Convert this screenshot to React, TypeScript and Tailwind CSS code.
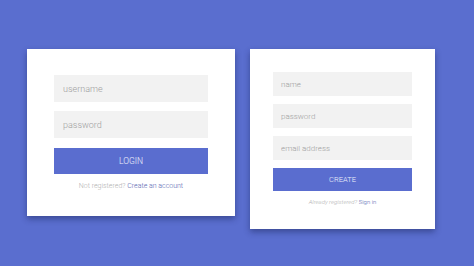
import React from "react";

const font = { fontFamily: "Roboto, 'Liberation Sans', sans-serif" };

function Field({ placeholder, size }: { placeholder: string; size: "lg" | "sm" }) {
  return (
    <input
      placeholder={placeholder}
      className={
        size === "lg"
          ? "block h-[27px] w-full bg-[#f2f2f2] px-[9px] text-[9px] font-light text-[#777] outline-none placeholder:text-[#9e9e9e]"
          : "block h-[24px] w-full bg-[#f2f2f2] px-[8px] text-[8px] font-light text-[#777] outline-none placeholder:text-[#9e9e9e]"
      }
    />
  );
}

export default function App() {
  return (
    <div
      className="flex h-[266px] w-[474px] items-start gap-[15px] bg-[#5a6ecf] pl-[27px] pt-[49px]"
      style={font}
    >
      {/* Login */}
      <div className="h-[167px] w-[208px] bg-white px-[27px] pt-[26px] shadow-[0_3px_6px_rgba(20,30,80,0.45)]">
        <div className="flex flex-col gap-[9px]">
          <Field placeholder="username" size="lg" />
          <Field placeholder="password" size="lg" />
        </div>
        <button className="mt-[10px] flex h-[26px] w-full items-center justify-center bg-[#5a6dcf] text-[8.5px] font-light text-white/90">
          LOGIN
        </button>
        <p className="mt-[7px] text-center text-[7px] font-light text-[#b0b0b0]">
          Not registered? <span className="text-[#5565b0]">Create an account</span>
        </p>
      </div>

      {/* Register */}
      <div className="h-[180px] w-[185px] bg-white px-[23px] pt-[23px] shadow-[0_3px_6px_rgba(20,30,80,0.45)]">
        <div className="flex flex-col gap-[8px]">
          <Field placeholder="name" size="sm" />
          <Field placeholder="password" size="sm" />
          <Field placeholder="email address" size="sm" />
        </div>
        <button className="mt-[8px] flex h-[23px] w-full items-center justify-center bg-[#5a6dcf] text-[7.5px] font-light text-white/90">
          CREATE
        </button>
        <p className="mt-[6px] text-center text-[6px] font-light italic text-[#b0b0b0]">
          Already registered? <span className="not-italic text-[#5565b0]">Sign in</span>
        </p>
      </div>
    </div>
  );
}
